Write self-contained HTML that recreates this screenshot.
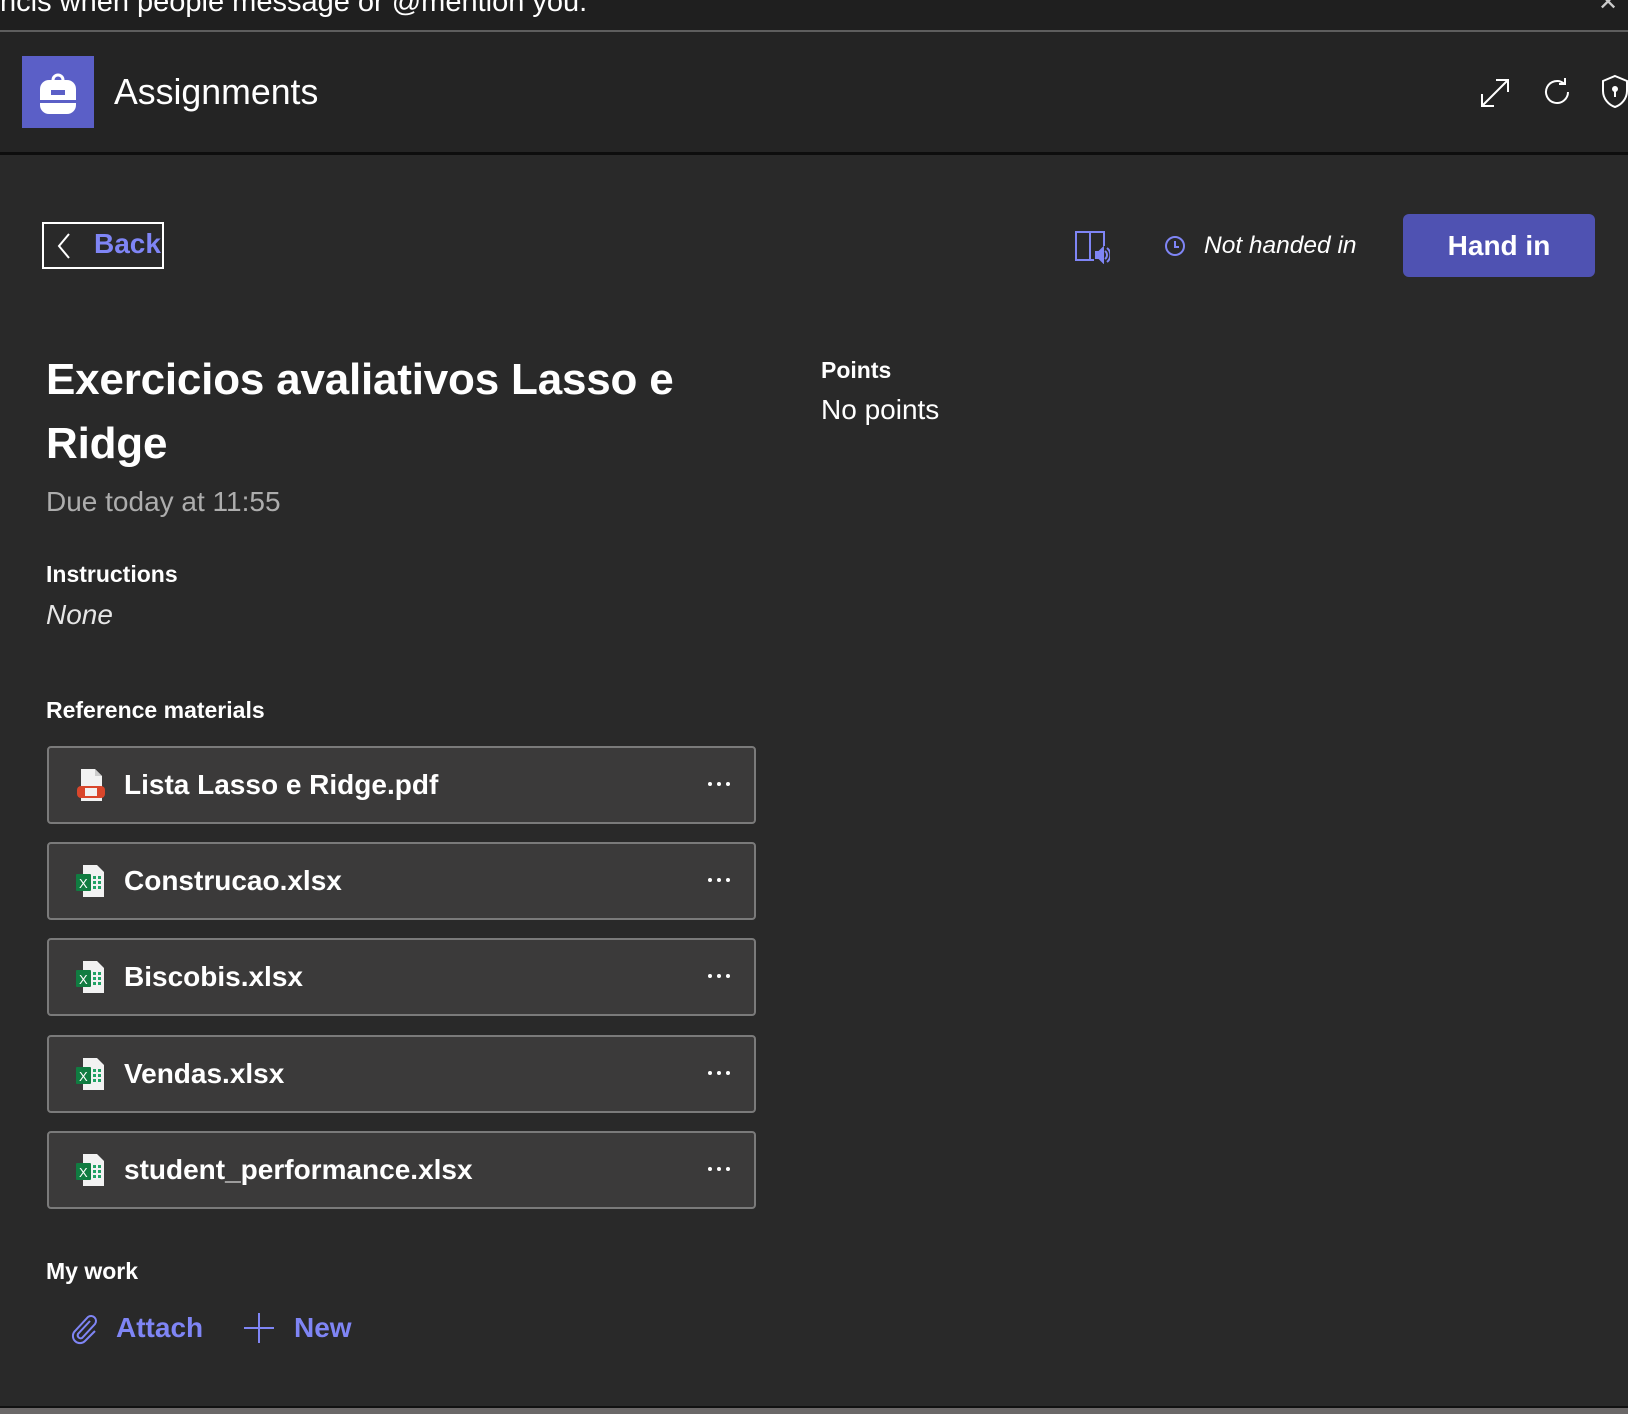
<!DOCTYPE html>
<html><head><meta charset="utf-8"><style>
*{margin:0;padding:0;box-sizing:border-box}
body{width:1628px;height:1414px;overflow:hidden;background:#292929;font-family:"Liberation Sans",sans-serif;color:#fff;position:relative}
.a{position:absolute;white-space:nowrap}
.card{position:absolute;left:47px;width:709px;height:78px;background:#3b3a3a;border:2px solid #7a7a7a;border-radius:4px}
.card .t{position:absolute;left:75px;top:0;line-height:74px;font-size:28px;font-weight:bold;color:#fff}
.card .d{position:absolute;right:24px;top:34px;display:flex;gap:5px}
.card .d i{width:4px;height:4px;border-radius:50%;background:#fff;display:block}
.card svg{position:absolute;left:26px;top:20px}
</style></head><body>
<div class="a" style="left:0;top:0;width:1628px;height:31px;background:#1f1f1f"></div>
<div class="a" style="left:0;top:-14px;font-size:29px;color:#fff">ncis when people message or @mention you.</div>
<div class="a" style="left:1598px;top:-12px;font-size:24px;color:#ccc">✕</div>
<div class="a" style="left:0;top:30px;width:1628px;height:2px;background:#5e5e5e"></div>
<div class="a" style="left:0;top:32px;width:1628px;height:120px;background:#242424"></div>
<div class="a" style="left:0;top:152px;width:1628px;height:3px;background:#0d0d0d"></div>
<div class="a" style="left:22px;top:56px;width:72px;height:72px;background:#5b5fc7"></div>
<svg class="a" style="left:36px;top:68px" width="44" height="48" viewBox="0 0 44 48"><path d="M17 12a5 5 0 0110 0" stroke="#fff" stroke-width="3" fill="none"/><rect x="4" y="12" width="36" height="34" rx="9" fill="#fff"/><rect x="15" y="22" width="14" height="5" fill="#5b5fc7"/><rect x="4" y="32" width="36" height="3" fill="#5b5fc7"/></svg>
<div class="a" style="left:114px;top:72px;font-size:35.7px;color:#fff">Assignments</div>
<svg class="a" style="left:1478px;top:76px" width="34" height="34" viewBox="0 0 34 34" fill="none" stroke="#fff" stroke-width="2"><path d="M4 30L30 4M18 4h12v12M4 18v12h12"/></svg>
<svg class="a" style="left:1541px;top:76px" width="32" height="32" viewBox="0 0 32 32" fill="none" stroke="#fff" stroke-width="2"><path d="M27 16a11 11 0 11-4-8.5M24 2v6h-6"/></svg>
<svg class="a" style="left:1600px;top:74px" width="30" height="36" viewBox="0 0 30 36" fill="none" stroke="#fff" stroke-width="2"><path d="M15 2l12 5v10c0 8-6 14-12 16C9 31 3 25 3 17V7z"/><circle cx="15" cy="15" r="2" fill="#fff"/><path d="M15 17v6"/></svg>

<div class="a" style="left:42px;top:222px;width:122px;height:47px;border:2px solid #fff"></div>
<svg class="a" style="left:56px;top:232px" width="16" height="28" viewBox="0 0 16 28" fill="none" stroke="#fff" stroke-width="2"><path d="M13 2L3 14l10 12"/></svg>
<div class="a" style="left:94px;top:228px;font-size:28px;font-weight:bold;color:#7f85f5">Back</div>
<svg class="a" style="left:1074px;top:230px" width="36" height="34" viewBox="0 0 36 34" fill="none" stroke="#7f85f5" stroke-width="2"><path d="M2 2h14v28H2zM16 2h14v14M16 30h4"/><path d="M22 22h3l4-4v14l-4-4h-3z" fill="#7f85f5"/><path d="M31 21a5 5 0 010 8M33 18a9 9 0 010 14"/></svg>
<svg class="a" style="left:1164px;top:235px" width="22" height="22" viewBox="0 0 22 22" fill="none" stroke="#7f85f5" stroke-width="2"><circle cx="11" cy="11" r="9"/><path d="M11 6v6h4"/></svg>
<div class="a" style="left:1204px;top:232px;font-size:24.5px;font-style:italic;color:#fff">Not handed in</div>
<div class="a" style="left:1403px;top:214px;width:192px;height:63px;background:#4f52b2;border-radius:6px;font-size:28px;font-weight:bold;text-align:center;line-height:63px">Hand in</div>

<div class="a" style="left:46px;top:348px;font-size:44px;font-weight:bold;line-height:64px;letter-spacing:-0.2px">Exercicios avaliativos Lasso e<br>Ridge</div>
<div class="a" style="left:46px;top:486px;font-size:28px;color:#adadad">Due today at 11:55</div>
<div class="a" style="left:46px;top:561px;font-size:23px;font-weight:bold">Instructions</div>
<div class="a" style="left:46px;top:599px;font-size:28px;font-style:italic;color:#e6e6e6">None</div>
<div class="a" style="left:821px;top:357px;font-size:23px;font-weight:bold">Points</div>
<div class="a" style="left:821px;top:394px;font-size:28px">No points</div>
<div class="a" style="left:46px;top:697px;font-size:23px;font-weight:bold">Reference materials</div>

<div class="card" style="top:746px"><svg width="32" height="34" viewBox="0 0 32 34"><path d="M6 1h14l7 7v25H6z" fill="#f2f2f2"/><path d="M20 1v7h7" fill="#ccc"/><rect x="2" y="18" width="28" height="12" rx="4" fill="#d9462b"/><rect x="9" y="19" width="14" height="10" fill="#f2f2f2" stroke="#d9462b" stroke-width="2"/></svg><div class="t">Lista Lasso e Ridge.pdf</div><div class="d"><i></i><i></i><i></i></div></div>
<div class="card" style="top:842px"><svg width="32" height="34" viewBox="0 0 32 34"><path d="M8 1h14l7 7v25H8z" fill="#f2f2f2"/><g fill="#21a366"><rect x="18" y="12" width="3" height="3"/><rect x="23" y="12" width="3" height="3"/><rect x="18" y="17" width="3" height="3"/><rect x="23" y="17" width="3" height="3"/><rect x="18" y="22" width="3" height="3"/><rect x="23" y="22" width="3" height="3"/></g><rect x="1" y="10" width="15" height="17" rx="1" fill="#107c41"/><text x="4" y="24" font-size="13" fill="#fff" font-family="Liberation Sans">X</text></svg><div class="t">Construcao.xlsx</div><div class="d"><i></i><i></i><i></i></div></div>
<div class="card" style="top:938px"><svg width="32" height="34" viewBox="0 0 32 34"><path d="M8 1h14l7 7v25H8z" fill="#f2f2f2"/><g fill="#21a366"><rect x="18" y="12" width="3" height="3"/><rect x="23" y="12" width="3" height="3"/><rect x="18" y="17" width="3" height="3"/><rect x="23" y="17" width="3" height="3"/><rect x="18" y="22" width="3" height="3"/><rect x="23" y="22" width="3" height="3"/></g><rect x="1" y="10" width="15" height="17" rx="1" fill="#107c41"/><text x="4" y="24" font-size="13" fill="#fff" font-family="Liberation Sans">X</text></svg><div class="t">Biscobis.xlsx</div><div class="d"><i></i><i></i><i></i></div></div>
<div class="card" style="top:1035px"><svg width="32" height="34" viewBox="0 0 32 34"><path d="M8 1h14l7 7v25H8z" fill="#f2f2f2"/><g fill="#21a366"><rect x="18" y="12" width="3" height="3"/><rect x="23" y="12" width="3" height="3"/><rect x="18" y="17" width="3" height="3"/><rect x="23" y="17" width="3" height="3"/><rect x="18" y="22" width="3" height="3"/><rect x="23" y="22" width="3" height="3"/></g><rect x="1" y="10" width="15" height="17" rx="1" fill="#107c41"/><text x="4" y="24" font-size="13" fill="#fff" font-family="Liberation Sans">X</text></svg><div class="t">Vendas.xlsx</div><div class="d"><i></i><i></i><i></i></div></div>
<div class="card" style="top:1131px"><svg width="32" height="34" viewBox="0 0 32 34"><path d="M8 1h14l7 7v25H8z" fill="#f2f2f2"/><g fill="#21a366"><rect x="18" y="12" width="3" height="3"/><rect x="23" y="12" width="3" height="3"/><rect x="18" y="17" width="3" height="3"/><rect x="23" y="17" width="3" height="3"/><rect x="18" y="22" width="3" height="3"/><rect x="23" y="22" width="3" height="3"/></g><rect x="1" y="10" width="15" height="17" rx="1" fill="#107c41"/><text x="4" y="24" font-size="13" fill="#fff" font-family="Liberation Sans">X</text></svg><div class="t">student_performance.xlsx</div><div class="d"><i></i><i></i><i></i></div></div>

<div class="a" style="left:46px;top:1258px;font-size:23px;font-weight:bold">My work</div>
<svg class="a" style="left:70px;top:1313px" width="30" height="32" viewBox="0 0 30 32" fill="none" stroke="#7f85f5" stroke-width="2"><path d="M20 8L8 21a3 3 0 004 4L25 11a5 5 0 00-7-7L5 18a7 7 0 0010 10l10-10"/></svg>
<div class="a" style="left:116px;top:1312px;font-size:28px;font-weight:bold;color:#7f85f5">Attach</div>
<svg class="a" style="left:244px;top:1312px" width="30" height="32" viewBox="0 0 30 32" fill="none" stroke="#7f85f5" stroke-width="2"><path d="M15 1v30M0 16h30"/></svg>
<div class="a" style="left:294px;top:1312px;font-size:28px;font-weight:bold;color:#7f85f5">New</div>
<div class="a" style="left:0;top:1406px;width:1628px;height:2px;background:#111"></div>
<div class="a" style="left:0;top:1408px;width:1628px;height:6px;background:#6b6868"></div>
</body></html>
